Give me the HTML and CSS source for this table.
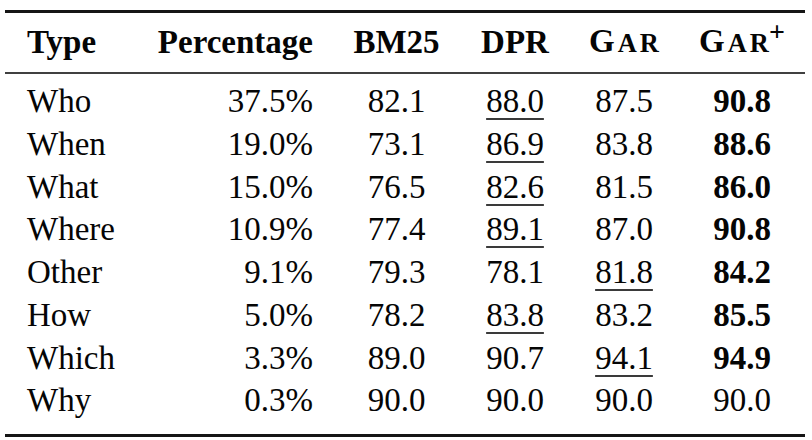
FILE: index.html
```html
<!DOCTYPE html>
<html lang="en">
<head>
<meta charset="utf-8">
<title>Accuracy by question type</title>
<link rel="stylesheet" href="styles.css">
</head>
<body>
<table class="results">
  <colgroup>
    <col class="c-type">
    <col class="c-pct">
    <col class="c-bm">
    <col class="c-dpr">
    <col class="c-gar">
    <col class="c-garp">
  </colgroup>
  <thead>
    <tr>
      <th class="left">Type</th>
      <th class="right">Percentage</th>
      <th>BM25</th>
      <th>DPR</th>
      <th><span class="sc">G<span class="small">A<span class="r">R</span></span></span></th>
      <th class="last"><span class="sc">G<span class="small">A<span class="r">R</span></span></span><sup class="plus">+</sup></th>
    </tr>
  </thead>
  <tbody>
    <tr class="first">
      <td class="left">Who</td><td class="right">37.5%</td><td>82.1</td><td><span class="ul">88.0</span></td><td>87.5</td><td class="last b">90.8</td>
    </tr>
    <tr>
      <td class="left">When</td><td class="right">19.0%</td><td>73.1</td><td><span class="ul">86.9</span></td><td>83.8</td><td class="last b">88.6</td>
    </tr>
    <tr>
      <td class="left">What</td><td class="right">15.0%</td><td>76.5</td><td><span class="ul">82.6</span></td><td>81.5</td><td class="last b">86.0</td>
    </tr>
    <tr>
      <td class="left">Where</td><td class="right">10.9%</td><td>77.4</td><td><span class="ul">89.1</span></td><td>87.0</td><td class="last b">90.8</td>
    </tr>
    <tr>
      <td class="left">Other</td><td class="right">9.1%</td><td>79.3</td><td>78.1</td><td><span class="ul">81.8</span></td><td class="last b">84.2</td>
    </tr>
    <tr>
      <td class="left">How</td><td class="right">5.0%</td><td>78.2</td><td><span class="ul">83.8</span></td><td>83.2</td><td class="last b">85.5</td>
    </tr>
    <tr>
      <td class="left">Which</td><td class="right">3.3%</td><td>89.0</td><td>90.7</td><td><span class="ul">94.1</span></td><td class="last b">94.9</td>
    </tr>
    <tr class="final">
      <td class="left">Why</td><td class="right">0.3%</td><td>90.0</td><td>90.0</td><td>90.0</td><td class="last">90.0</td>
    </tr>
  </tbody>
</table>
</body>
</html>
```
FILE: styles.css
```css
html, body {
  margin: 0;
  padding: 0;
  background: #ffffff;
}

body {
  padding: 10px 0 0 5px;
  font-family: "Liberation Serif", "Times New Roman", serif;
  color: #050505;
}

.results {
  width: 800px;
  table-layout: fixed;
  border-collapse: separate;
  border-spacing: 0;
  font-size: 33px;
}

.c-type { width: 135px; }
.c-pct { width: 183px; }
.c-bm { width: 147px; }
.c-dpr { width: 90px; }
.c-gar { width: 128px; }
.c-garp { width: 117px; }

.results th,
.results td {
  padding: 0;
  text-align: center;
  white-space: nowrap;
}

.results th {
  font-weight: bold;
  height: 57px;
  line-height: 57px;
  border-top: 3px solid #151515;
  border-bottom: 2px solid #404040;
}

.results td {
  line-height: 42.75px;
}

.results .left {
  text-align: left;
  padding-left: 22px;
}

.results .right {
  text-align: right;
  padding-right: 10px;
}

.results .last {
  padding-right: 9px;
}

.results .first td {
  padding-top: 6px;
}

.results .final td {
  padding-bottom: 12px;
  border-bottom: 3px solid #151515;
}

.b {
  font-weight: bold;
}

.sc {
  letter-spacing: 3px;
}

.small {
  font-size: 0.8em;
}

.r {
  letter-spacing: 0;
}

.plus {
  font-size: 28px;
  line-height: 0;
  vertical-align: 11px;
  margin-left: 0;
}

.ul {
  text-decoration: underline;
  text-decoration-thickness: 2px;
  text-underline-offset: 6px;
  text-decoration-color: #3a3a3a;
  text-decoration-skip-ink: none;
}
```
